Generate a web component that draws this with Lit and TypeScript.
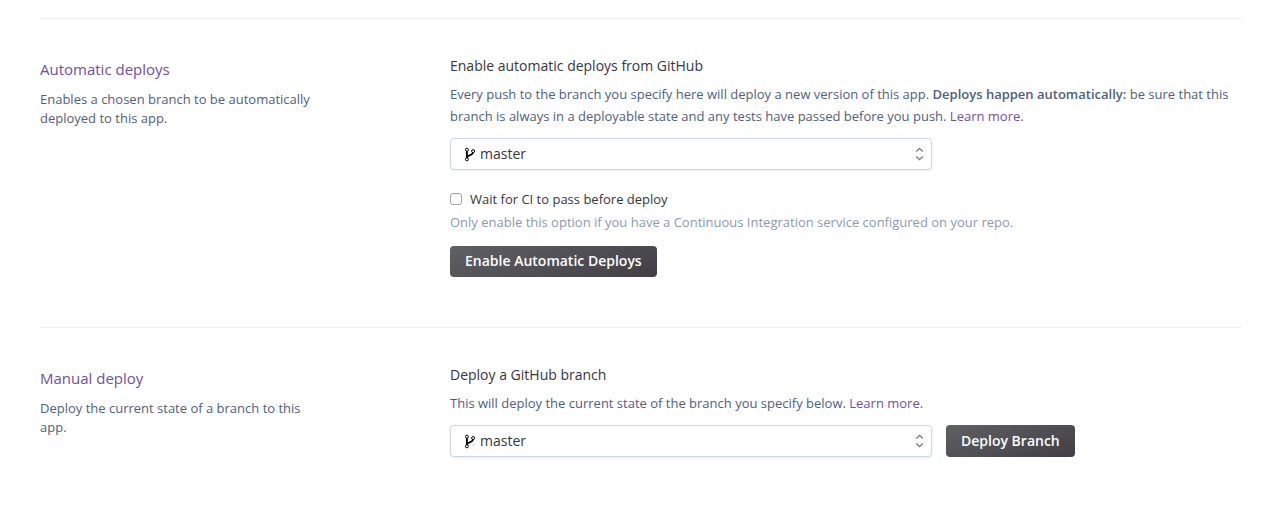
import { LitElement, html, css } from "lit";
import { customElement, property } from "lit/decorators.js";

@customElement("branch-select")
class BranchSelect extends LitElement {
  @property() label = "";

  static styles = css`
    :host {
      display: block;
      flex: 0 1 482px;
      max-width: 482px;
    }
    .field {
      position: relative;
      display: block;
    }
    .select {
      appearance: none;
      box-sizing: border-box;
      display: block;
      width: 100%;
      height: 32px;
      margin: 0;
      padding: 0 32px 0 29px;
      border: 1px solid #cfd7e6;
      border-radius: 4px;
      background: #fff;
      box-shadow: 0 1px 2px rgba(207, 215, 230, 0.5);
      color: #36363b;
      font: 14px/20px "Open Sans", "Noto Sans", sans-serif;
    }
    .branch,
    .arrows {
      position: absolute;
      pointer-events: none;
    }
    .branch {
      left: 14px;
      top: 9px;
    }
    .arrows {
      right: 8px;
      top: 9px;
    }
  `;

  render() {
    return html`
      <div class="field">
        <select class="select" aria-label=${this.label}>
          <option>master</option>
        </select>
        <svg class="branch" width="12" height="15" viewBox="0 0 12 15" fill="none" stroke="#000">
          <circle cx="2.9" cy="2.7" r="1.5" />
          <circle cx="2.9" cy="12.3" r="1.5" />
          <circle cx="9.1" cy="4.1" r="1.5" />
          <path d="M2.9 4.2V10.8" stroke-width="1.9" />
          <path d="M8.9 5.6C8.9 8.6 3.4 7.6 3.1 10.6" stroke-width="1.7" />
        </svg>
        <svg class="arrows" width="9" height="14" viewBox="0 0 9 14" fill="none" stroke="#83818f" stroke-width="1.4">
          <path d="M1.2 4.6 4.5 1.5 7.8 4.6M1.2 9.4 4.5 12.5 7.8 9.4" />
        </svg>
      </div>
    `;
  }
}

@customElement("app-root")
class AppRoot extends LitElement {
  static styles = css`
    :host {
      display: block;
      padding: 18px 21px 0 40px;
      color: #50607a;
      font: 13px/22px "Open Sans", "Noto Sans", sans-serif;
    }
    .section {
      display: grid;
      grid-template-columns: 280px minmax(0, 1fr);
      column-gap: 130px;
      padding: 36px 0 50px;
      border-top: 1px solid #ebebf0;
    }
    .title {
      margin: 3px 0 10px;
      color: #724f9a;
      font-size: 15px;
      font-weight: 400;
      line-height: 22px;
    }
    .summary {
      margin: 0;
      line-height: 19px;
    }
    .heading {
      margin: 0 0 6px;
      color: #36363b;
      font-size: 14px;
      font-weight: 400;
      line-height: 22px;
    }
    .text {
      margin: 0 0 11px;
    }
    .strong {
      font-weight: 600;
    }
    .link {
      color: #724f9a;
      text-decoration: none;
    }
    .check {
      display: flex;
      align-items: center;
      gap: 8px;
      margin-top: 18px;
      color: #36363b;
    }
    .box {
      appearance: none;
      box-sizing: border-box;
      width: 12px;
      height: 12px;
      margin: 0;
      border: 1px solid #a5a5a5;
      border-radius: 3px;
      background: #fff;
    }
    .box:checked {
      background: #79589f;
    }
    .hint {
      margin: 1px 0 13px;
      color: #8c9ab0;
    }
    .row {
      display: flex;
      gap: 14px;
    }
    .button {
      padding: 4px 15px 6px;
      border: 0;
      border-radius: 4px;
      background: linear-gradient(160deg, #5f6064, #413f45);
      color: #fff;
      font: 600 14px/21px "Open Sans", "Noto Sans", sans-serif;
      white-space: nowrap;
    }
  `;

  render() {
    return html`
      <section class="section">
        <div>
          <h2 class="title">Automatic deploys</h2>
          <p class="summary">Enables a chosen branch to be automatically deployed to this app.</p>
        </div>
        <div>
          <h3 class="heading">Enable automatic deploys from GitHub</h3>
          <p class="text">
            Every push to the branch you specify here will deploy a new version of this app.
            <strong class="strong">Deploys happen automatically:</strong> be sure that this branch is
            always in a deployable state and any tests have passed before you push.
            <a class="link" href="#">Learn more</a>.
          </p>
          <branch-select label="Branch to deploy automatically"></branch-select>
          <label class="check">
            <input class="box" type="checkbox" />Wait for CI to pass before deploy
          </label>
          <p class="hint">
            Only enable this option if you have a Continuous Integration service configured on your repo.
          </p>
          <button class="button" type="button">Enable Automatic Deploys</button>
        </div>
      </section>
      <section class="section">
        <div>
          <h2 class="title">Manual deploy</h2>
          <p class="summary">Deploy the current state of a branch to this app.</p>
        </div>
        <div>
          <h3 class="heading">Deploy a GitHub branch</h3>
          <p class="text">
            This will deploy the current state of the branch you specify below.
            <a class="link" href="#">Learn more</a>.
          </p>
          <div class="row">
            <branch-select label="Branch to deploy"></branch-select>
            <button class="button" type="button">Deploy Branch</button>
          </div>
        </div>
      </section>
    `;
  }
}
